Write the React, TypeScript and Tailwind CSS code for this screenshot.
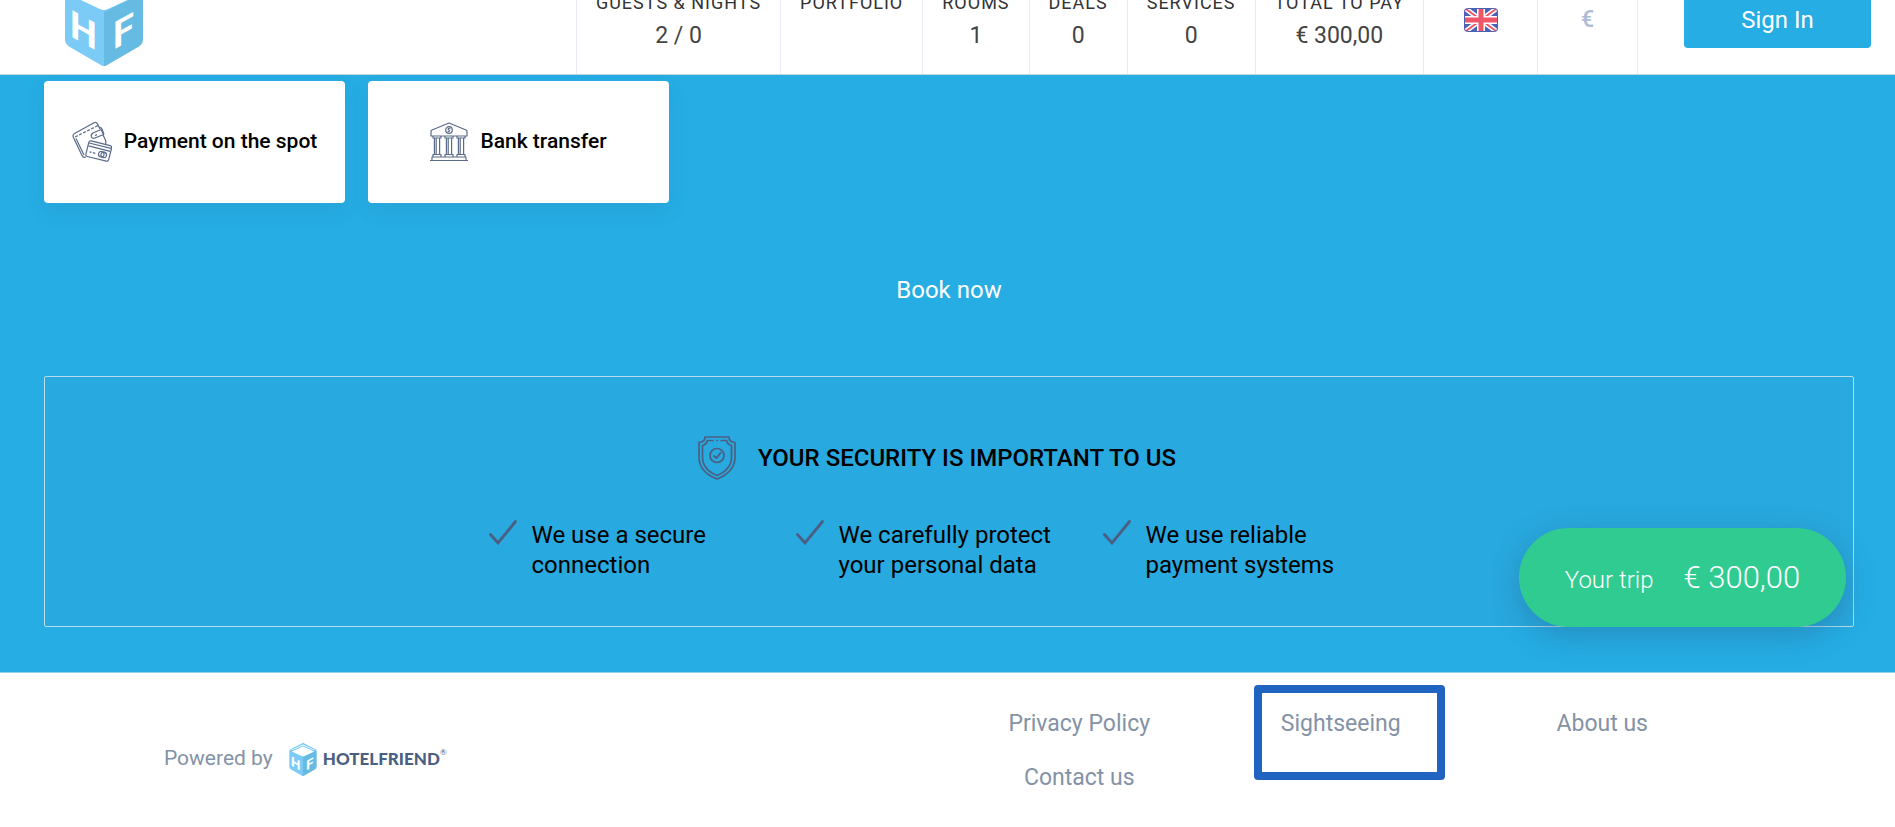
import React from 'react'

const STATS = [
  { label: 'GUESTS & NIGHTS', value: '2 / 0' },
  { label: 'PORTFOLIO', value: '' },
  { label: 'ROOMS', value: '1' },
  { label: 'DEALS', value: '0' },
  { label: 'SERVICES', value: '0' },
  { label: 'TOTAL TO PAY', value: '€ 300,00' },
]

const SECURITY_POINTS = [
  'We use a secure connection',
  'We carefully protect your personal data',
  'We use reliable payment systems',
]

const Cube = ({ className }: { className?: string }) => (
  <svg viewBox="0 0 78 94" className={className} aria-hidden="true">
    <path d="M39 0 L74 18 Q78 20 78 25 V67 Q78 72 74 74.500 L43 92.500 Q39 95 39 94 Z" fill="#66bbe3" />
    <path d="M39 0 L4 18 Q0 20 0 25 V67 Q0 72 4 74.500 L35 92.500 Q37 94 39 94 Z" fill="#7ccaf6" />
    <path d="M39 0 L78 21 L39 40 L0 21 Z" fill="#7ccaf6" />
    <path d="M5 20 L39 4.500 L73 20 L71 21 L39 7 L7 21 Z" fill="#fff" />
    <path d="M7 24 L39 10 L71 24 L43 37 Q39 39 35 37 Z" fill="#fff" />
    <g fill="#fff" fontFamily="Roboto, sans-serif" fontWeight="700" fontSize="38">
      <text x="0" y="0" transform="translate(5 64) skewY(29)">H</text>
      <text x="0" y="0" transform="translate(48 78) skewY(-29)">F</text>
    </g>
  </svg>
)

const Flag = () => (
  <svg viewBox="0 0 34 24" className="h-6 w-[34px] rounded-sm" role="img" aria-label="English">
    <rect width="34" height="24" rx="3" fill="#4a62b3" />
    <path d="M2 1 L32 23 M32 1 L2 23" stroke="#fff" strokeWidth="5" />
    <path d="M2 1 L32 23 M32 1 L2 23" stroke="#f0566a" strokeWidth="2" />
    <path d="M17 1 V23 M1 12 H33" stroke="#fff" strokeWidth="8" />
    <path d="M17 1 V23 M1 12 H33" stroke="#f0566a" strokeWidth="5" />
    <rect x=".5" y=".5" width="33" height="23" rx="3" fill="none" stroke="#4a62b3" />
  </svg>
)

const WalletIcon = () => (
  <svg viewBox="0 0 40 42" className="h-[42px] w-10 shrink-0" fill="none" stroke="#5b6b8a" strokeWidth="1.200" strokeLinejoin="round" aria-hidden="true">
    <path d="M14 36 Q11 37 10 34.500 L1.200 16 Q0.500 13.500 2.500 12.500 L22 1.800 Q24.500 0.800 25.500 3 L28 8" />
    <path d="M31 14 L33.500 19 Q34 20.500 33.800 23 M27 6.500 Q29.500 6 30.200 8.500 L32 13.500" />
    <path d="M3 16 L26 4.500" strokeDasharray="3 1.500" />
    <path d="M4 17.500 L12 34" />
    <path d="M29 8.500 L21 12 Q18.500 13.500 19.500 16 Q20.700 18 23 17 L31.500 13.500 Z M23 14.500 L25 13.600" />
    <g transform="rotate(14 26.500 30)">
      <rect x="15" y="22" width="23.500" height="16" rx="2" fill="#fff" />
      <path d="M15.500 24.500 H38 M15.500 27.500 H38 M18 33 H20 M21.500 33 H24" />
      <circle cx="30" cy="32.500" r="2.800" />
      <circle cx="32.500" cy="32.500" r="2.800" />
    </g>
  </svg>
)

const BankIcon = () => (
  <svg viewBox="0 0 38 40" className="h-10 w-[38px] shrink-0" fill="none" stroke="#5b6b8a" strokeWidth="1.200" strokeLinejoin="round" aria-hidden="true">
    <path d="M19 1 L36 8 Q37 8.500 37 9.500 V14 H1 V9.500 Q1 8.500 2 8 Z" />
    <circle cx="19" cy="8" r="3.300" />
    <path d="M20.500 6.500 Q19 5.500 18 7 Q18.500 8 19.500 8.300 Q20 9.500 17.500 9.500" />
    {[7, 19, 31].map((x) => (
      <g key={x} transform={`translate(${x} 0)`}>
        <path d="M-4 14 V16 H4 V14 M-2.600 16 V32 M-.8 16 V32 M2.600 16 V32 M-4 35 V32.500 H4 V35" />
      </g>
    ))}
    <path d="M2 38 V35 H36 V38 M0 38.500 H38" />
  </svg>
)

const ShieldIcon = () => (
  <svg viewBox="0 0 38 44" className="h-11 w-[38px] shrink-0" fill="none" stroke="#4b5f82" strokeWidth="1.700" strokeLinejoin="round" strokeLinecap="round" aria-hidden="true">
    <path d="M7 1 H31 Q31 6 37 6.500 V21 Q37 36 19 43 Q1 36 1 21 V6.500 Q7 6 7 1 Z" />
    <path d="M15 4.500 H9.500 Q8.500 8.500 4.500 9.500 V21 Q4.500 33.500 19 39.500 Q33.500 33.500 33.500 21 V9.500 Q29.500 8.500 28.500 4.500 H23 M19 4.500 H19.200" />
    <circle cx="19" cy="19.500" r="7" />
    <path d="M16 20 L18.500 22 L22.500 17" strokeWidth="2" />
  </svg>
)

const CheckIcon = () => (
  <svg viewBox="0 0 28 25" className="h-[25px] w-7 shrink-0" fill="none" stroke="#4b5f82" strokeWidth="2.800" strokeLinecap="round" aria-hidden="true">
    <path d="M1.500 14.500 L9 23 L26.500 1.500" />
  </svg>
)

const Header = () => (
  <header className="overflow-hidden border-b border-[#c3d5de] bg-white">
    <div className="-mt-7 flex items-stretch">
      <a href="#home" aria-label="HotelFriend" className="ml-[65px] mr-auto block">
        <Cube className="h-[94px] w-[78px]" />
      </a>
      <dl className="flex">
        {STATS.map((stat) => (
          <div key={stat.label} className="flex flex-col border-l border-[#e8eaf3] px-[19px] pt-[21px] text-center">
            <dt className="text-lg leading-5 tracking-[1px] text-[#333]">{stat.label}</dt>
            <dd className="mt-[7px] text-[23px] leading-8 text-[#444]">{stat.value}</dd>
          </div>
        ))}
      </dl>
      <button type="button" className="flex w-[114px] justify-center border-l border-[#e8eaf3] pt-9">
        <Flag />
      </button>
      <button type="button" className="flex w-[101px] justify-center border-x border-[#e8eaf3] pt-8 text-[23px] leading-8 font-medium text-[#adbbd3]">
        €
      </button>
      <div className="pb-[26px] pl-[46px] pr-6 pt-5">
        <button type="button" className="h-14 w-[187px] rounded bg-[#25ade4] text-2xl text-white">
          Sign In
        </button>
      </div>
    </div>
  </header>
)

const PaymentCard = ({ icon, children }: { icon: React.ReactNode; children: React.ReactNode }) => (
  <button
    type="button"
    className="flex h-[122px] w-[301px] items-center justify-center gap-3 rounded bg-white text-[21px] font-medium text-black shadow-[0_8px_20px_rgba(60,90,120,0.1)]"
  >
    {icon}
    {children}
  </button>
)

const FooterLink = ({ children }: { children: React.ReactNode }) => (
  <a href="#footer" className="text-center text-[23px] leading-[54px] text-[#8492a6]">
    {children}
  </a>
)

const App = () => {
  return (
    <div className="min-h-screen bg-white font-[Roboto,sans-serif]">
      <Header />

      <main className="border-b border-[#8fd2ee] bg-[#25ade4] pb-[45px] pl-11 pr-[41px] pt-[6px]">
        <div className="flex gap-[23px]">
          <PaymentCard icon={<WalletIcon />}>Payment on the spot</PaymentCard>
          <PaymentCard icon={<BankIcon />}>Bank transfer</PaymentCard>
        </div>

        <div className="flex justify-center pb-14 pt-[57px]">
          <button type="button" className="h-[60px] px-10 text-2xl text-white">
            Book now
          </button>
        </div>

        <section className="relative rounded-xs border border-[#b9dcea] bg-[#28a9df] pb-[46px] pt-[59px] text-black">
          <div className="flex items-center justify-center gap-[22px] pr-6">
            <ShieldIcon />
            <h2 className="text-2xl font-medium">YOUR SECURITY IS IMPORTANT TO US</h2>
          </div>
          <ul className="mx-auto mt-10 grid max-w-[921px] grid-cols-3">
            {SECURITY_POINTS.map((point) => (
              <li key={point} className="flex gap-[15px] pr-8 text-2xl leading-[30px]">
                <CheckIcon />
                <span>{point}</span>
              </li>
            ))}
          </ul>

          <button
            type="button"
            className="absolute -bottom-px right-[7px] flex h-[99px] w-[327px] items-baseline justify-center gap-[30px] rounded-full bg-[#2fcb91] font-light leading-[99px] text-white shadow-[0_8px_30px_rgba(40,80,120,0.35)]"
          >
            <span className="text-2xl leading-[99px]">Your trip</span>
            <span className="text-[31px] leading-[99px]">€ 300,00</span>
          </button>
        </section>
      </main>

      <footer className="grid grid-cols-2 pb-4 pl-[164px] pr-[162px] pt-6">
        <div className="flex items-center gap-4 pt-4 text-[21px] text-[#8492a6]">
          Powered by
          <a href="#hotelfriend" className="flex items-center gap-[6px]">
            <Cube className="h-[33px] w-[28px]" />
            <span className="flex font-[Lato,sans-serif] text-[17px] font-black text-[#4b5f82]">
              HOTELFRIEND
              <span className="text-[8px] font-normal">®</span>
            </span>
          </a>
        </div>
        <nav className="grid grid-cols-3">
          <FooterLink>Privacy Policy</FooterLink>
          <div className="relative grid">
            <FooterLink>Sightseeing</FooterLink>
            {/* highlight frame */}
            <div className="pointer-events-none absolute -top-3 left-11 h-[95px] w-[191px] rounded border-8 border-[#2063c0]" />
          </div>
          <FooterLink>About us</FooterLink>
          <FooterLink>Contact us</FooterLink>
        </nav>
      </footer>
    </div>
  )
}

export default App
